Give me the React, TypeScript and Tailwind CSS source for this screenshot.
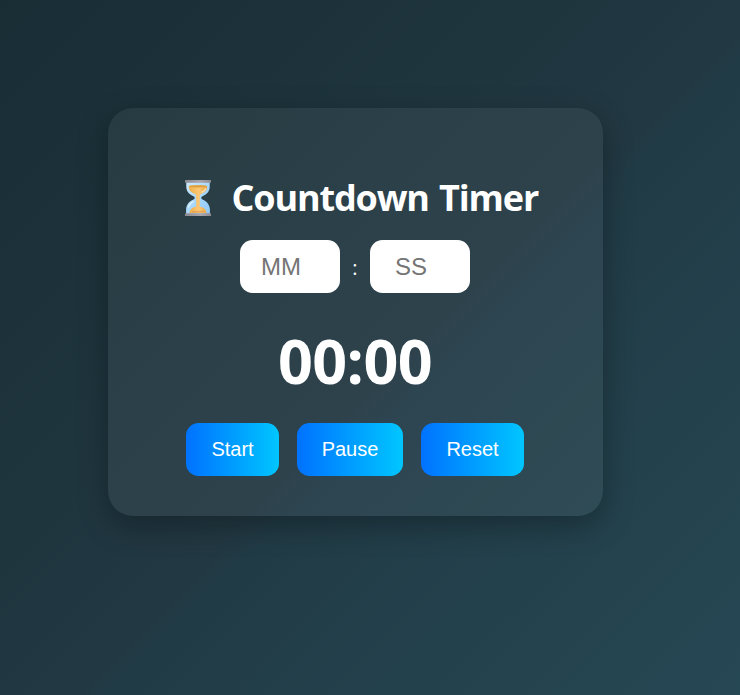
function Hourglass() {
  return (
    <svg className="h-9 w-[26px] shrink-0" viewBox="0 0 26 36" aria-hidden="true">
      <defs>
        <linearGradient id="glass" x1="0" y1="0" x2="1" y2="1">
          <stop offset="0" stopColor="#cfe9fd" />
          <stop offset="0.5" stopColor="#a9d8fb" />
          <stop offset="1" stopColor="#8fc9f7" />
        </linearGradient>
        <linearGradient id="sand" x1="0" y1="0" x2="1" y2="0">
          <stop offset="0" stopColor="#efae45" />
          <stop offset="0.55" stopColor="#fcc876" />
          <stop offset="1" stopColor="#e9a545" />
        </linearGradient>
        <linearGradient id="cap" x1="0" y1="0" x2="1" y2="0">
          <stop offset="0" stopColor="#8b8a91" />
          <stop offset="0.6" stopColor="#a9a7ad" />
          <stop offset="1" stopColor="#8d8b92" />
        </linearGradient>
      </defs>
      <path
        d="M1.3 2H24.7V7C24.7 11.5 21.5 14.6 17.5 16.2C15.8 17.1 15.8 18.6 17.5 19.4C22 21.3 24.9 25 24.9 29.5V34H1.1V29.5C1.1 25 4 21.3 8.5 19.4C10.2 18.6 10.2 17.1 8.5 16.2C4.5 14.6 1.3 11.5 1.3 7Z"
        fill="url(#glass)"
      />
      <path
        d="M3.8 6C8 5 18 5 22.2 6C22.2 10.5 19.5 12.8 16.4 13.8C15.1 14.3 14.8 15 14.8 17V26.8C18.2 27.1 20 28.6 20.8 30.6L21.6 33H4.4L5.2 30.6C6 28.6 7.8 27.1 11.2 26.8V17C11.2 15 10.9 14.3 9.6 13.8C6.5 12.8 3.8 10.5 3.8 6Z"
        fill="url(#sand)"
      />
      <ellipse cx="13" cy="6.3" rx="8.8" ry="1.1" fill="#dc9d3c" />
      <path d="M16.5 12.4C19 11.4 20.4 10.2 20.8 8.4" fill="none" stroke="#ffe6bd" strokeWidth="1.2" />
      <path d="M3.4 27.5C4 24.8 6 22.6 8.6 21.3" fill="none" stroke="#dff2ff" strokeWidth="1.3" />
      <path d="M7 31.8H19" fill="none" stroke="#d99148" strokeWidth="0.8" />
      <rect width="26" height="2.8" rx="0.5" fill="url(#cap)" />
      <rect y="33.2" width="26" height="2.8" rx="0.5" fill="url(#cap)" />
    </svg>
  );
}

const inputClass =
  "h-[53px] w-[100px] rounded-[12.5px] bg-white pl-0 pr-[18px] text-center font-['Liberation_Sans',Arial,sans-serif] text-2xl text-black outline-none placeholder:text-[#757575]";
const buttonClass =
  "h-[53px] rounded-[12.5px] bg-linear-[90deg,#0072ff,#00c6ff] pb-0.5 text-center font-['Liberation_Sans',Arial,sans-serif] text-xl text-white";

export default function App() {
  return (
    <main className="h-[695px] w-[740px] overflow-hidden bg-linear-[135deg,#182d34_0%,#223842_53%,#213b46_56%,#264854_100%] pl-[108px] pt-[108px] font-['Open_Sans','Noto_Sans',sans-serif] text-white">
      <section className="flex h-[408px] w-[495px] flex-col items-center rounded-[25px] bg-white/[0.055] pt-[66px] shadow-[0_10px_31px_rgba(0,0,0,0.3)]">
        <h1 className="flex h-12 items-center gap-[21px] whitespace-nowrap pl-[15px] text-[36px] font-bold leading-12">
          <Hourglass />
          <span className="w-[310px] tracking-[-1.15px] [word-spacing:2px]">Countdown Timer</span>
        </h1>
        <div className="mt-[18px] flex items-center pr-px">
          <input className={inputClass} placeholder="MM" aria-label="Minutes" />
          <span className="w-[30px] pt-[3px] text-center text-xl">:</span>
          <input className={inputClass} placeholder="SS" aria-label="Seconds" />
        </div>
        <div className="mt-7 h-20 pr-px text-[61px] font-[735] leading-20 tracking-[-0.6px]">00:00</div>
        <div className="mt-[22px] flex gap-[18px] pr-px">
          <button className={`${buttonClass} w-[93px]`}>Start</button>
          <button className={`${buttonClass} w-[106px]`}>Pause</button>
          <button className={`${buttonClass} w-[103px]`}>Reset</button>
        </div>
      </section>
    </main>
  );
}
